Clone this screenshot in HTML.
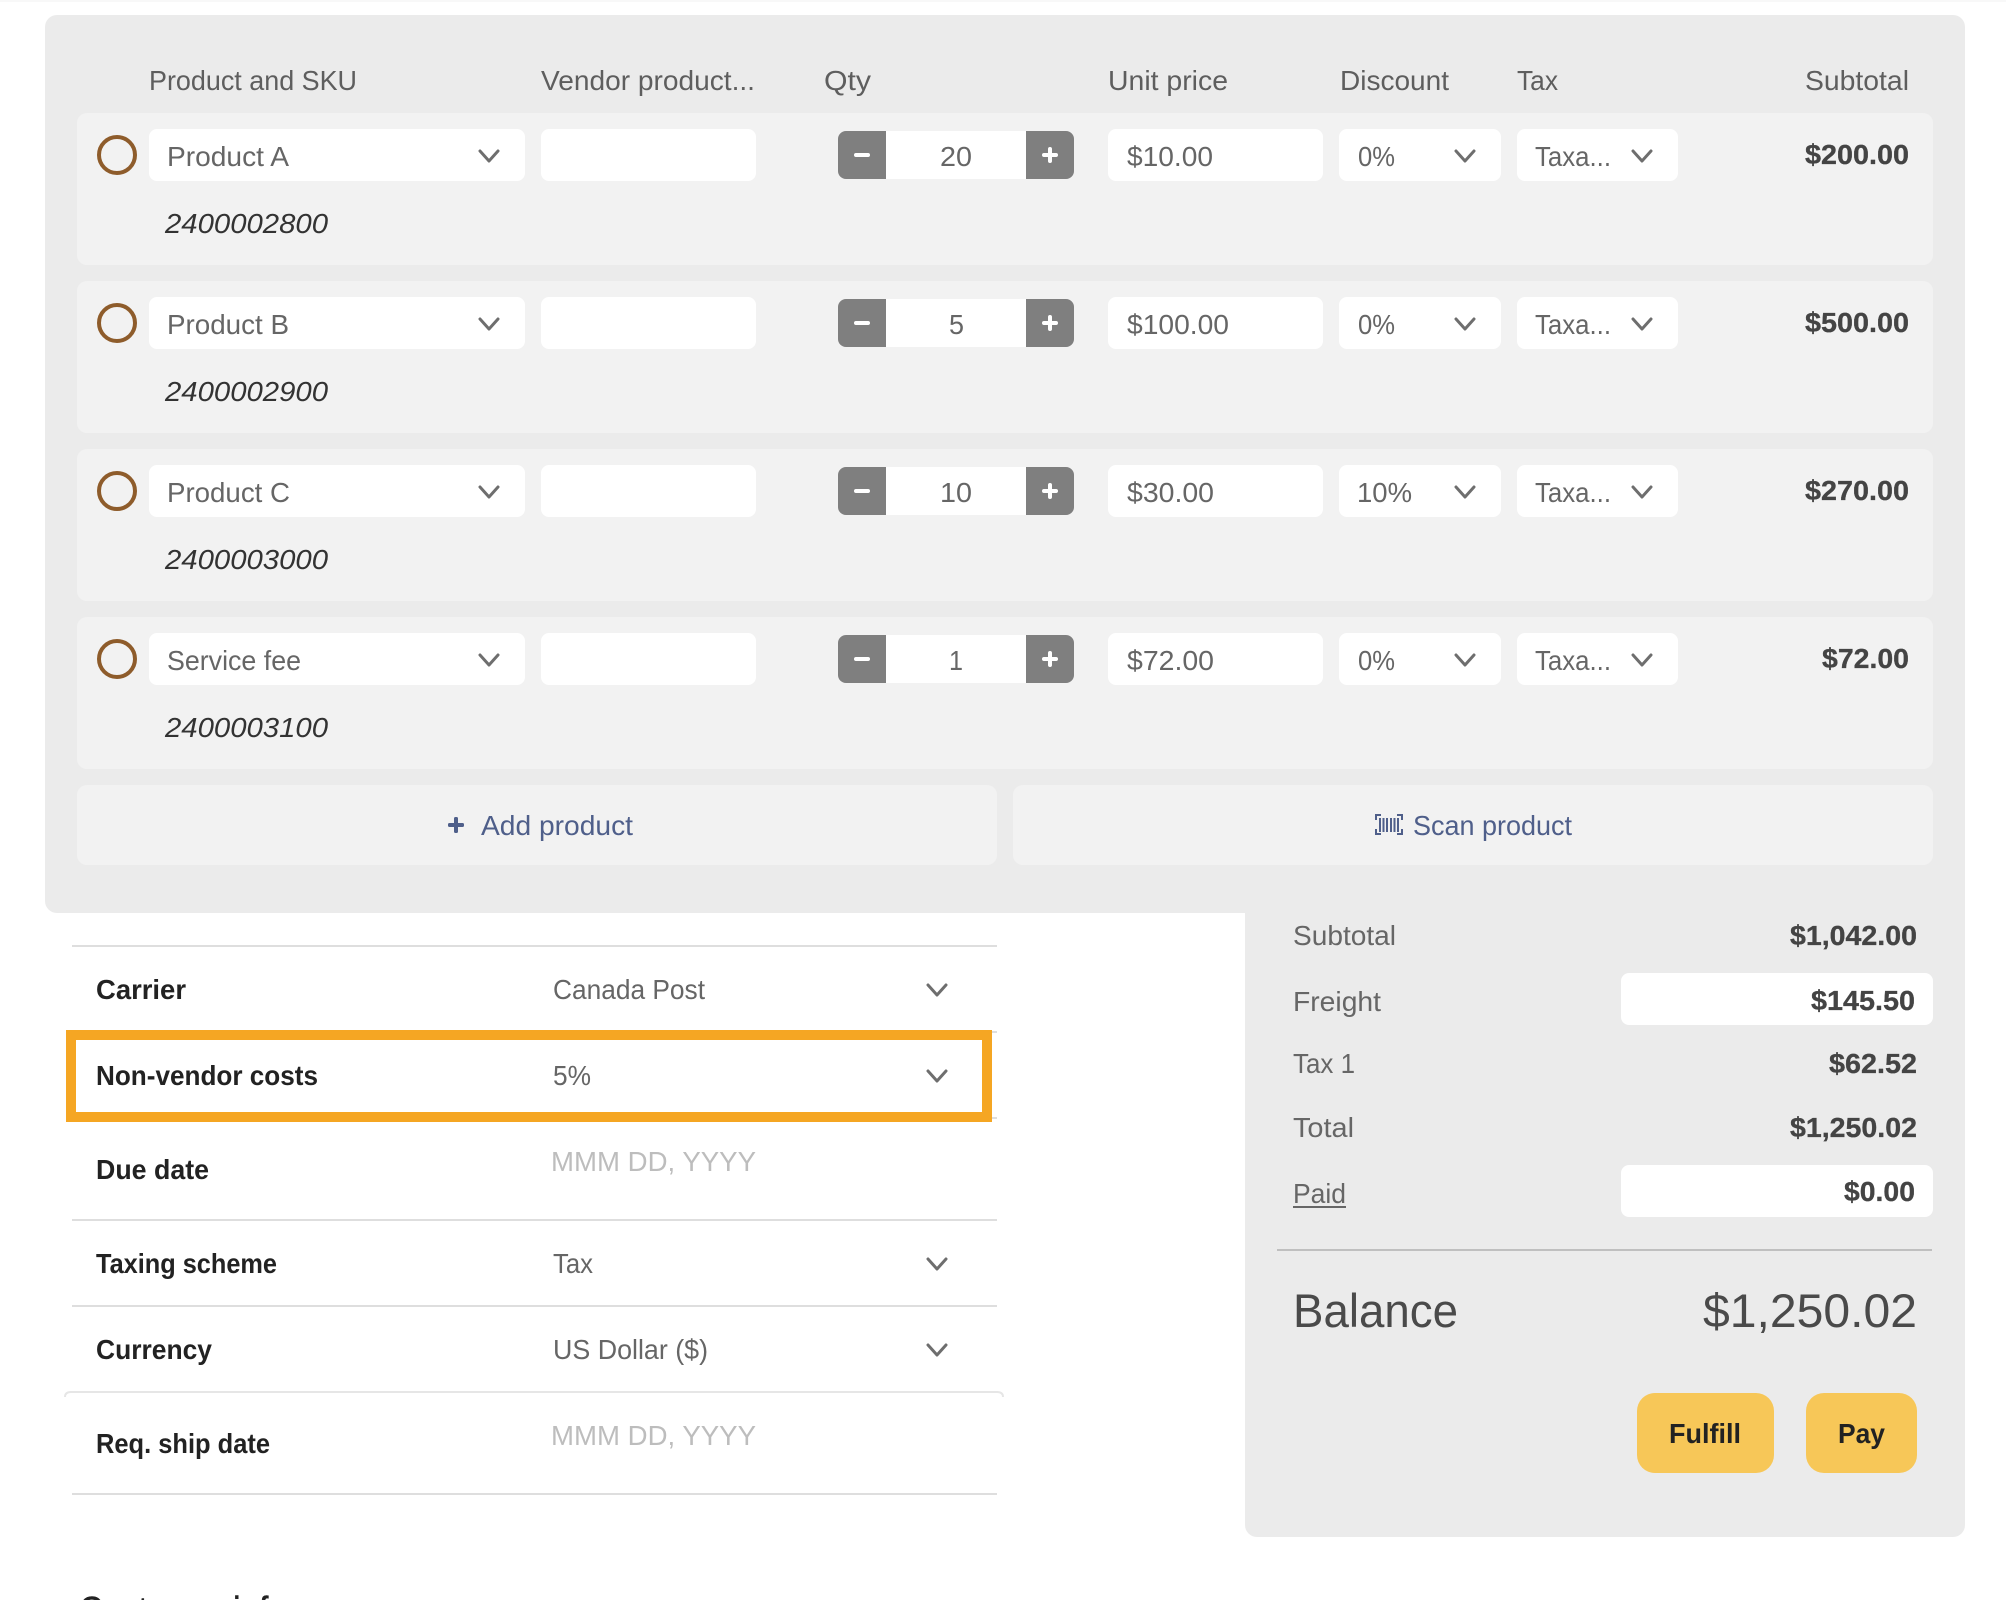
<!DOCTYPE html>
<html lang="en">
<head>
<meta charset="utf-8">
<title>Order</title>
<style>
html,body{margin:0;padding:0;background:#fff;width:2006px;height:1600px;overflow:hidden}
svg{display:block}
text{font-family:"Liberation Sans",sans-serif;font-size:28px;fill:#666}
.h{fill:#5e5e5e}
.sku{font-style:italic;fill:#333}
.b{font-weight:bold;fill:#444;stroke:#444;stroke-width:.3px}
.l{font-weight:bold;fill:#222}
.ph{fill:#bdbdbd}
.link{fill:#4f5f8a}
.chev{fill:none;stroke:#6e6e6e;stroke-width:3;stroke-linecap:round;stroke-linejoin:round}
.line{fill:#dedede}
</style>
</head>
<body>
<svg xmlns="http://www.w3.org/2000/svg" width="2006" height="1600" viewBox="0 0 2006 1600">
<rect width="2006" height="1600" fill="#fff"/>
<rect width="2006" height="2" fill="#f8f8f8"/>
<rect x="45" y="15" width="1920" height="898" rx="12" fill="#ebebeb"/>
<rect x="1245" y="880" width="720" height="657" rx="12" fill="#ebebeb"/>

<text class="h" x="149" y="90" textLength="208" lengthAdjust="spacingAndGlyphs">Product and SKU</text>
<text class="h" x="541" y="90" textLength="214" lengthAdjust="spacingAndGlyphs">Vendor product...</text>
<text class="h" x="824" y="90" textLength="47" lengthAdjust="spacingAndGlyphs">Qty</text>
<text class="h" x="1108" y="90" textLength="120" lengthAdjust="spacingAndGlyphs">Unit price</text>
<text class="h" x="1340" y="90" textLength="109" lengthAdjust="spacingAndGlyphs">Discount</text>
<text class="h" x="1517" y="90" textLength="41" lengthAdjust="spacingAndGlyphs">Tax</text>
<text class="h" x="1805" y="90" textLength="104" lengthAdjust="spacingAndGlyphs">Subtotal</text>

<!-- Row 1 -->
<g>
<rect x="77" y="113" width="1856" height="152" rx="10" fill="#f2f2f2"/>
<circle cx="117" cy="155" r="18" fill="none" stroke="#8e5c2b" stroke-width="4"/>
<rect x="149" y="129" width="376" height="52" rx="8" fill="#fff"/>
<rect x="541" y="129" width="215" height="52" rx="8" fill="#fff"/>
<rect x="886" y="131" width="140" height="48" fill="#fff"/>
<path d="M886 131H846a8 8 0 0 0-8 8v32a8 8 0 0 0 8 8h40z" fill="#7f7f7f"/>
<path d="M1026 131h40a8 8 0 0 1 8 8v32a8 8 0 0 1-8 8h-40z" fill="#7f7f7f"/>
<rect x="854" y="153" width="16" height="4" rx="2" fill="#fff"/>
<rect x="1042" y="153" width="16" height="4" rx="2" fill="#fff"/>
<rect x="1048" y="147" width="4" height="16" rx="2" fill="#fff"/>
<rect x="1108" y="129" width="215" height="52" rx="8" fill="#fff"/>
<rect x="1339" y="129" width="162" height="52" rx="8" fill="#fff"/>
<rect x="1517" y="129" width="161" height="52" rx="8" fill="#fff"/>
<path class="chev" d="M480 151L489 161L498 151"/>
<path class="chev" d="M1456 151L1465 161L1474 151"/>
<path class="chev" d="M1633 151L1642 161L1651 151"/>
<text x="167" y="166" textLength="122" lengthAdjust="spacingAndGlyphs">Product A</text>
<text x="940" y="166" textLength="32" lengthAdjust="spacingAndGlyphs">20</text>
<text x="1127" y="166" textLength="86" lengthAdjust="spacingAndGlyphs">$10.00</text>
<text x="1358" y="166" textLength="37" lengthAdjust="spacingAndGlyphs">0%</text>
<text x="1535" y="166" textLength="76" lengthAdjust="spacingAndGlyphs">Taxa...</text>
<text class="b" x="1805" y="164" textLength="104" lengthAdjust="spacingAndGlyphs">$200.00</text>
<text class="sku" x="165" y="233" textLength="163" lengthAdjust="spacingAndGlyphs">2400002800</text>
</g>

<!-- Row 2 -->
<g transform="translate(0,168)">
<rect x="77" y="113" width="1856" height="152" rx="10" fill="#f2f2f2"/>
<circle cx="117" cy="155" r="18" fill="none" stroke="#8e5c2b" stroke-width="4"/>
<rect x="149" y="129" width="376" height="52" rx="8" fill="#fff"/>
<rect x="541" y="129" width="215" height="52" rx="8" fill="#fff"/>
<rect x="886" y="131" width="140" height="48" fill="#fff"/>
<path d="M886 131H846a8 8 0 0 0-8 8v32a8 8 0 0 0 8 8h40z" fill="#7f7f7f"/>
<path d="M1026 131h40a8 8 0 0 1 8 8v32a8 8 0 0 1-8 8h-40z" fill="#7f7f7f"/>
<rect x="854" y="153" width="16" height="4" rx="2" fill="#fff"/>
<rect x="1042" y="153" width="16" height="4" rx="2" fill="#fff"/>
<rect x="1048" y="147" width="4" height="16" rx="2" fill="#fff"/>
<rect x="1108" y="129" width="215" height="52" rx="8" fill="#fff"/>
<rect x="1339" y="129" width="162" height="52" rx="8" fill="#fff"/>
<rect x="1517" y="129" width="161" height="52" rx="8" fill="#fff"/>
<path class="chev" d="M480 151L489 161L498 151"/>
<path class="chev" d="M1456 151L1465 161L1474 151"/>
<path class="chev" d="M1633 151L1642 161L1651 151"/>
<text x="167" y="166" textLength="122" lengthAdjust="spacingAndGlyphs">Product B</text>
<text x="949" y="166" textLength="15" lengthAdjust="spacingAndGlyphs">5</text>
<text x="1127" y="166" textLength="102" lengthAdjust="spacingAndGlyphs">$100.00</text>
<text x="1358" y="166" textLength="37" lengthAdjust="spacingAndGlyphs">0%</text>
<text x="1535" y="166" textLength="76" lengthAdjust="spacingAndGlyphs">Taxa...</text>
<text class="b" x="1805" y="164" textLength="104" lengthAdjust="spacingAndGlyphs">$500.00</text>
<text class="sku" x="165" y="233" textLength="163" lengthAdjust="spacingAndGlyphs">2400002900</text>
</g>

<!-- Row 3 -->
<g transform="translate(0,336)">
<rect x="77" y="113" width="1856" height="152" rx="10" fill="#f2f2f2"/>
<circle cx="117" cy="155" r="18" fill="none" stroke="#8e5c2b" stroke-width="4"/>
<rect x="149" y="129" width="376" height="52" rx="8" fill="#fff"/>
<rect x="541" y="129" width="215" height="52" rx="8" fill="#fff"/>
<rect x="886" y="131" width="140" height="48" fill="#fff"/>
<path d="M886 131H846a8 8 0 0 0-8 8v32a8 8 0 0 0 8 8h40z" fill="#7f7f7f"/>
<path d="M1026 131h40a8 8 0 0 1 8 8v32a8 8 0 0 1-8 8h-40z" fill="#7f7f7f"/>
<rect x="854" y="153" width="16" height="4" rx="2" fill="#fff"/>
<rect x="1042" y="153" width="16" height="4" rx="2" fill="#fff"/>
<rect x="1048" y="147" width="4" height="16" rx="2" fill="#fff"/>
<rect x="1108" y="129" width="215" height="52" rx="8" fill="#fff"/>
<rect x="1339" y="129" width="162" height="52" rx="8" fill="#fff"/>
<rect x="1517" y="129" width="161" height="52" rx="8" fill="#fff"/>
<path class="chev" d="M480 151L489 161L498 151"/>
<path class="chev" d="M1456 151L1465 161L1474 151"/>
<path class="chev" d="M1633 151L1642 161L1651 151"/>
<text x="167" y="166" textLength="123" lengthAdjust="spacingAndGlyphs">Product C</text>
<text x="940" y="166" textLength="32" lengthAdjust="spacingAndGlyphs">10</text>
<text x="1127" y="166" textLength="87" lengthAdjust="spacingAndGlyphs">$30.00</text>
<text x="1357" y="166" textLength="55" lengthAdjust="spacingAndGlyphs">10%</text>
<text x="1535" y="166" textLength="76" lengthAdjust="spacingAndGlyphs">Taxa...</text>
<text class="b" x="1805" y="164" textLength="104" lengthAdjust="spacingAndGlyphs">$270.00</text>
<text class="sku" x="165" y="233" textLength="163" lengthAdjust="spacingAndGlyphs">2400003000</text>
</g>

<!-- Row 4 -->
<g transform="translate(0,504)">
<rect x="77" y="113" width="1856" height="152" rx="10" fill="#f2f2f2"/>
<circle cx="117" cy="155" r="18" fill="none" stroke="#8e5c2b" stroke-width="4"/>
<rect x="149" y="129" width="376" height="52" rx="8" fill="#fff"/>
<rect x="541" y="129" width="215" height="52" rx="8" fill="#fff"/>
<rect x="886" y="131" width="140" height="48" fill="#fff"/>
<path d="M886 131H846a8 8 0 0 0-8 8v32a8 8 0 0 0 8 8h40z" fill="#7f7f7f"/>
<path d="M1026 131h40a8 8 0 0 1 8 8v32a8 8 0 0 1-8 8h-40z" fill="#7f7f7f"/>
<rect x="854" y="153" width="16" height="4" rx="2" fill="#fff"/>
<rect x="1042" y="153" width="16" height="4" rx="2" fill="#fff"/>
<rect x="1048" y="147" width="4" height="16" rx="2" fill="#fff"/>
<rect x="1108" y="129" width="215" height="52" rx="8" fill="#fff"/>
<rect x="1339" y="129" width="162" height="52" rx="8" fill="#fff"/>
<rect x="1517" y="129" width="161" height="52" rx="8" fill="#fff"/>
<path class="chev" d="M480 151L489 161L498 151"/>
<path class="chev" d="M1456 151L1465 161L1474 151"/>
<path class="chev" d="M1633 151L1642 161L1651 151"/>
<text x="167" y="166" textLength="134" lengthAdjust="spacingAndGlyphs">Service fee</text>
<text x="949" y="166" textLength="14" lengthAdjust="spacingAndGlyphs">1</text>
<text x="1127" y="166" textLength="87" lengthAdjust="spacingAndGlyphs">$72.00</text>
<text x="1358" y="166" textLength="37" lengthAdjust="spacingAndGlyphs">0%</text>
<text x="1535" y="166" textLength="76" lengthAdjust="spacingAndGlyphs">Taxa...</text>
<text class="b" x="1822" y="164" textLength="87" lengthAdjust="spacingAndGlyphs">$72.00</text>
<text class="sku" x="165" y="233" textLength="163" lengthAdjust="spacingAndGlyphs">2400003100</text>
</g>

<!-- Add / Scan -->
<rect x="77" y="785" width="920" height="80" rx="10" fill="#f2f2f2"/>
<rect x="1013" y="785" width="920" height="80" rx="10" fill="#f2f2f2"/>
<rect x="448" y="823" width="16" height="4" rx="1.5" fill="#4f5f8a"/>
<rect x="454" y="817" width="4" height="16" rx="1.5" fill="#4f5f8a"/>
<text class="link" x="481" y="835" textLength="152" lengthAdjust="spacingAndGlyphs">Add product</text>
<path d="M1381 815H1376V820M1397 815H1402V820M1376 829V834H1381M1402 829V834H1397" fill="none" stroke="#4f5f8a" stroke-width="2"/>
<path d="M1380 818v14M1383.500 818v14M1387 818v14M1391 818v14M1394.500 818v14M1398 818v14" fill="none" stroke="#4f5f8a" stroke-width="2"/>
<text class="link" x="1413" y="835" textLength="159" lengthAdjust="spacingAndGlyphs">Scan product</text>

<!-- Form lines -->
<rect class="line" x="72" y="945" width="925" height="2"/>
<rect class="line" x="72" y="1031" width="925" height="2"/>
<rect class="line" x="72" y="1117" width="925" height="2"/>
<rect class="line" x="72" y="1219" width="925" height="2"/>
<rect class="line" x="72" y="1305" width="925" height="2"/>
<path d="M65 1397Q65 1392 71 1392H997Q1003 1392 1003 1397" fill="none" stroke="#e6e6e6" stroke-width="2"/>
<rect class="line" x="72" y="1493" width="925" height="2"/>

<!-- Highlight -->
<rect x="71" y="1035" width="916" height="82" fill="#fff" stroke="#f5a623" stroke-width="10"/>

<!-- Form fields -->
<text class="l" x="96" y="999" textLength="90" lengthAdjust="spacingAndGlyphs">Carrier</text>
<text x="553" y="999" textLength="152" lengthAdjust="spacingAndGlyphs">Canada Post</text>
<path class="chev" d="M928 985L937 995L946 985"/>
<text class="l" x="96" y="1085" textLength="222" lengthAdjust="spacingAndGlyphs">Non-vendor costs</text>
<text x="553" y="1085" textLength="38" lengthAdjust="spacingAndGlyphs">5%</text>
<path class="chev" d="M928 1071L937 1081L946 1071"/>
<text class="l" x="96" y="1179" textLength="113" lengthAdjust="spacingAndGlyphs">Due date</text>
<text class="ph" x="551" y="1171" textLength="205" lengthAdjust="spacingAndGlyphs">MMM DD, YYYY</text>
<text class="l" x="96" y="1273" textLength="181" lengthAdjust="spacingAndGlyphs">Taxing scheme</text>
<text x="553" y="1273" textLength="40" lengthAdjust="spacingAndGlyphs">Tax</text>
<path class="chev" d="M928 1259L937 1269L946 1259"/>
<text class="l" x="96" y="1359" textLength="116" lengthAdjust="spacingAndGlyphs">Currency</text>
<text x="553" y="1359" textLength="155" lengthAdjust="spacingAndGlyphs">US Dollar ($)</text>
<path class="chev" d="M928 1345L937 1355L946 1345"/>
<text class="l" x="96" y="1453" textLength="174" lengthAdjust="spacingAndGlyphs">Req. ship date</text>
<text class="ph" x="551" y="1445" textLength="205" lengthAdjust="spacingAndGlyphs">MMM DD, YYYY</text>
<text x="79" y="1623" style="font-size:38px;fill:#222;stroke:#222;stroke-width:.5px" textLength="208" lengthAdjust="spacingAndGlyphs">Customer info</text>

<!-- Summary -->
<text x="1293" y="945" textLength="103" lengthAdjust="spacingAndGlyphs">Subtotal</text>
<text class="b" x="1790" y="945" textLength="127" lengthAdjust="spacingAndGlyphs">$1,042.00</text>
<rect x="1621" y="973" width="312" height="52" rx="8" fill="#fff"/>
<text x="1293" y="1011" textLength="88" lengthAdjust="spacingAndGlyphs">Freight</text>
<text class="b" x="1811" y="1010" textLength="104" lengthAdjust="spacingAndGlyphs">$145.50</text>
<text x="1293" y="1073" textLength="62" lengthAdjust="spacingAndGlyphs">Tax 1</text>
<text class="b" x="1829" y="1073" textLength="88" lengthAdjust="spacingAndGlyphs">$62.52</text>
<text x="1293" y="1137" textLength="61" lengthAdjust="spacingAndGlyphs">Total</text>
<text class="b" x="1790" y="1137" textLength="127" lengthAdjust="spacingAndGlyphs">$1,250.02</text>
<rect x="1621" y="1165" width="312" height="52" rx="8" fill="#fff"/>
<text x="1293" y="1203" textLength="53" lengthAdjust="spacingAndGlyphs">Paid</text>
<rect x="1293" y="1206" width="53" height="2" fill="#666"/>
<text class="b" x="1844" y="1201" textLength="71" lengthAdjust="spacingAndGlyphs">$0.00</text>
<rect x="1277" y="1249" width="655" height="2" fill="#bfbfbf"/>
<text x="1293" y="1327" style="font-size:47px;fill:#4a4a4a" textLength="165" lengthAdjust="spacingAndGlyphs">Balance</text>
<text x="1703" y="1327" style="font-size:47px;fill:#4a4a4a" textLength="214" lengthAdjust="spacingAndGlyphs">$1,250.02</text>
<rect x="1637" y="1393" width="137" height="80" rx="18" fill="#f7c758"/>
<text class="l" x="1669" y="1443" textLength="72" lengthAdjust="spacingAndGlyphs">Fulfill</text>
<rect x="1806" y="1393" width="111" height="80" rx="18" fill="#f7c758"/>
<text class="l" x="1838" y="1443" textLength="47" lengthAdjust="spacingAndGlyphs">Pay</text>
</svg>
</body>
</html>
